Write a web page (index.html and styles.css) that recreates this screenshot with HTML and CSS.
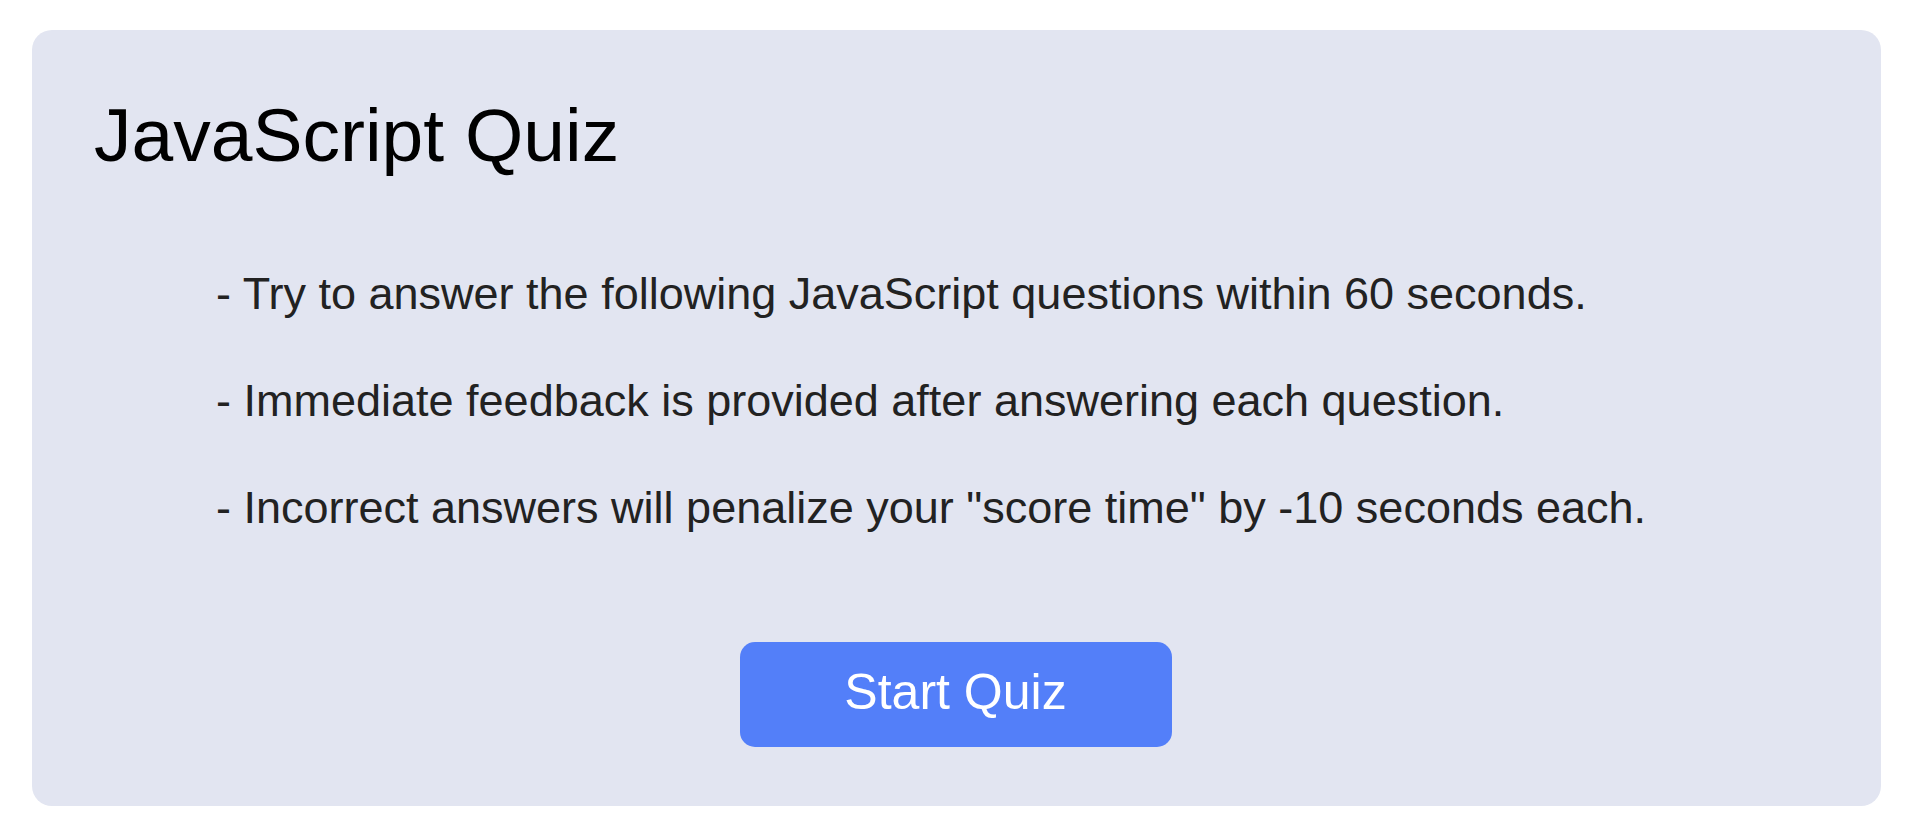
FILE: index.html
```html
<!DOCTYPE html>
<html lang="en">
<head>
<meta charset="utf-8">
<title>JavaScript Quiz</title>
<link rel="stylesheet" href="styles.css">
</head>
<body>
<main class="card">
  <h1 class="title">JavaScript Quiz</h1>
  <div class="rules">
    <p class="rule">- Try to answer the following JavaScript questions within 60 seconds.</p>
    <p class="rule">- Immediate feedback is provided after answering each question.</p>
    <p class="rule">- Incorrect answers will penalize your "score time" by -10 seconds each.</p>
  </div>
  <div class="actions">
    <button class="start-btn" type="button">Start Quiz</button>
  </div>
</main>
</body>
</html>
```

FILE: styles.css
```css
html, body {
  margin: 0;
  padding: 0;
  background: #ffffff;
}

body {
  font-family: "Liberation Sans", Arial, sans-serif;
}

.card {
  box-sizing: border-box;
  width: 1849px;
  height: 776px;
  margin: 30px 0 0 32px;
  padding: 62px 0 0 0;
  background: #e2e5f1;
  border-radius: 20px;
  display: flex;
  flex-direction: column;
}

.title {
  margin: 0;
  padding-left: 62px;
  font-size: 75px;
  font-weight: 400;
  line-height: 86px;
  color: #000000;
}

.rules {
  margin: 90px 0 0 184px;
  display: flex;
  flex-direction: column;
  gap: 55px;
}

.rule {
  margin: 0;
  font-size: 45px;
  line-height: 52px;
  color: #222222;
}

.actions {
  display: flex;
  justify-content: center;
  margin-top: 108px;
  padding-right: 2px;
}

.start-btn {
  box-sizing: border-box;
  width: 432px;
  height: 105px;
  padding: 22px 0 26px;
  border: none;
  border-radius: 15px;
  background: #537ff9;
  color: #ffffff;
  font-family: "Liberation Sans", Arial, sans-serif;
  font-size: 50px;
  line-height: 57px;
  cursor: pointer;
}
```
